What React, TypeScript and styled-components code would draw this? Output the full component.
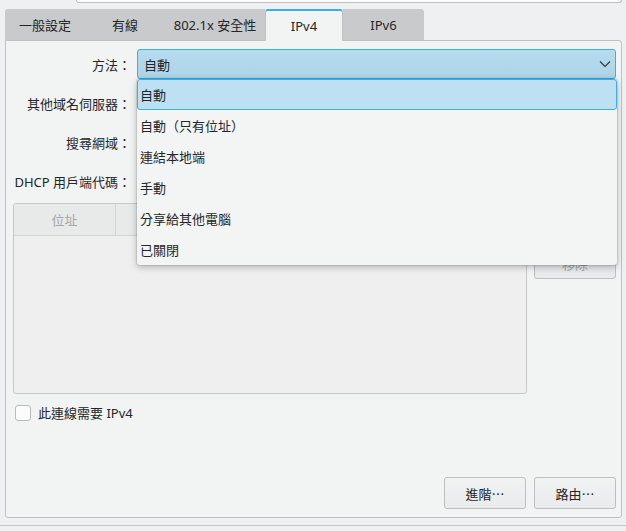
import React from "react";
import styled, { createGlobalStyle } from "styled-components";

const GlobalStyle = createGlobalStyle`
  html, body { margin: 0; padding: 0; background: #eff0f1; }
  body {
    font-family: "Noto Sans", "Noto Sans CJK TC", sans-serif;
    font-size: 13px;
    color: #232629;
  }
  * { box-sizing: border-box; }
`;

const Window = styled.div`
  width: 626px;
  height: 531px;
  position: relative;
  overflow: hidden;
  background: #eff0f1;
  display: flex;
  flex-direction: column;
`;

const TopField = styled.div`
  height: 3px;
  margin: 0 4px 0 76px;
  background: #fcfcfc;
  border: 1px solid #bcbebf;
  border-top: none;
  border-radius: 0 0 3px 3px;
`;

const TabBar = styled.div`
  display: flex;
  margin-top: 6px;
  padding-left: 5px;
  height: 31px;
`;

const Tab = styled.div<{ $w: number; $active?: boolean; $first?: boolean; $last?: boolean }>`
  width: ${(p) => p.$w}px;
  display: flex;
  align-items: center;
  justify-content: center;
  font-family: "Noto Sans", "Noto Sans CJK TC", sans-serif;
  font-size: 13px;
  color: #232629;
  background: ${(p) => (p.$active ? "#f2f3f3" : "#c9cacb")};
  border-top: ${(p) => (p.$active ? "2px solid #3daee9" : "none")};
  border-left: ${(p) => (p.$active ? "1px solid #bfc1c2" : "none")};
  border-right: ${(p) => (p.$active ? "1px solid #bfc1c2" : "none")};
  border-radius: ${(p) =>
    p.$active ? "3px 3px 0 0" : p.$first ? "3px 0 0 0" : p.$last ? "0 3px 0 0" : "0"};
  position: relative;
  z-index: ${(p) => (p.$active ? 2 : 1)};
  margin-bottom: ${(p) => (p.$active ? "-1px" : "0")};
  padding-bottom: ${(p) => (p.$active ? "1px" : "0")};
`;

const Panel = styled.div`
  margin: 0 4px 0 5px;
  height: 478px;
  background: #f2f3f3;
  border: 1px solid #bfc1c2;
  border-radius: 0 3px 3px 3px;
  padding: 8px 5px 8px 0;
  display: flex;
  flex-direction: column;
  position: relative;
`;

const Form = styled.div`
  display: grid;
  grid-template-columns: 125px 1fr;
  column-gap: 6px;
  row-gap: 9px;
  align-items: center;
`;

const Label = styled.div`
  text-align: right;
  white-space: nowrap;
  font-size: 13px;
  color: #232629;
`;

const Combo = styled.div`
  height: 30px;
  border: 1px solid #3daee9;
  border-radius: 3px;
  background: linear-gradient(#b6dcee, #acd3e7);
  display: flex;
  align-items: center;
  justify-content: space-between;
  padding: 0 4px 0 6px;
`;

const TextField = styled.div`
  height: 30px;
  border: 1px solid #bcbebf;
  border-radius: 3px;
  background: #fcfcfc;
`;

const TableArea = styled.div`
  display: flex;
  gap: 7px;
  margin-top: 7px;
  padding-left: 7px;
  height: 191px;
`;

const Table = styled.div`
  flex: 1;
  border: 1px solid #c6c7c8;
  border-radius: 3px;
  background: #efefef;
  overflow: hidden;
`;

const HeaderRow = styled.div`
  display: grid;
  grid-template-columns: 102px 200px 1fr;
  height: 32px;
  background: #e8e9e9;
  border-bottom: 1px solid #d3d4d5;
`;

const HeaderCell = styled.div<{ $divider?: boolean }>`
  display: flex;
  align-items: center;
  justify-content: center;
  color: #a6a7a8;
  font-size: 13px;
  border-right: ${(p) => (p.$divider ? "1px solid #d3d4d5" : "none")};
`;

const SideButtons = styled.div`
  width: 82px;
  display: flex;
  flex-direction: column;
  gap: 9px;
  padding-top: 3px;
`;

const Button = styled.div<{ $disabled?: boolean }>`
  height: 32px;
  width: 82px;
  border: 1px solid #bcbebf;
  border-radius: 3px;
  background: ${(p) => (p.$disabled ? "#e9eaeb" : "linear-gradient(#f1f2f2, #eaebec)")};
  color: ${(p) => (p.$disabled ? "#a6a7a8" : "#232629")};
  display: flex;
  align-items: center;
  justify-content: center;
  font-size: 13px;
`;

const Ellipsis = styled.span`
  font-family: "Noto Sans CJK TC", sans-serif;
`;

const CheckRow = styled.div`
  display: flex;
  align-items: center;
  gap: 7px;
  margin-top: 9px;
  padding-left: 9px;
`;

const CheckBox = styled.div`
  width: 16px;
  height: 16px;
  border: 1px solid #b8babc;
  border-radius: 3px;
  background: #fcfcfc;
`;

const Spacer = styled.div`
  flex: 1;
`;

const BottomButtons = styled.div`
  display: flex;
  justify-content: flex-end;
  gap: 8px;
`;

const BottomLine = styled.div`
  margin-top: 7px;
  height: 1px;
  background: #c4c5c6;
`;

const Popup = styled.div`
  position: absolute;
  left: 137px;
  top: 79px;
  width: 480px;
  height: 186px;
  background: #f3f4f4;
  border-radius: 3px;
  box-shadow: 0 2px 7px rgba(0, 0, 0, 0.28), 0 0 0 1px rgba(0, 0, 0, 0.08);
  display: flex;
  flex-direction: column;
  z-index: 10;
`;

const Item = styled.div<{ $selected?: boolean }>`
  height: 31px;
  display: flex;
  align-items: center;
  padding-left: ${(p) => (p.$selected ? "2px" : "3px")};
  font-size: 13px;
  color: #232629;
  background: ${(p) => (p.$selected ? "#bde0f3" : "transparent")};
  border: ${(p) => (p.$selected ? "1px solid #3daee9" : "none")};
  border-radius: ${(p) => (p.$selected ? "3px" : "0")};
`;

const Chevron = () => (
  <svg width="12" height="8" viewBox="0 0 12 8">
    <path d="M1 1.5 L6 6.5 L11 1.5" fill="none" stroke="#31363b" strokeWidth="1.1" />
  </svg>
);

const tabs = [
  { t: "一般設定", w: 80 },
  { t: "有線", w: 80 },
  { t: "802.1x 安全性", w: 100 },
  { t: "IPv4", w: 78, active: true },
  { t: "IPv6", w: 81 },
];

const options = ["自動", "自動（只有位址）", "連結本地端", "手動", "分享給其他電腦", "已關閉"];

export default function App() {
  return (
    <>
      <GlobalStyle />
      <Window>
        <TopField />
        <TabBar>
          {tabs.map((tab, i) => (
            <Tab key={tab.t} $w={tab.w} $active={tab.active} $first={i === 0} $last={i === tabs.length - 1}>
              {tab.t}
            </Tab>
          ))}
        </TabBar>
        <Panel>
          <Form>
            <Label>方法：</Label>
            <Combo>
              <span>自動</span>
              <Chevron />
            </Combo>
            <Label>其他域名伺服器：</Label>
            <TextField />
            <Label>搜尋網域：</Label>
            <TextField />
            <Label>DHCP 用戶端代碼：</Label>
            <TextField />
          </Form>
          <TableArea>
            <Table>
              <HeaderRow>
                <HeaderCell $divider>位址</HeaderCell>
                <HeaderCell $divider />
                <HeaderCell />
              </HeaderRow>
            </Table>
            <SideButtons>
              <Button $disabled />
              <Button $disabled>移除</Button>
            </SideButtons>
          </TableArea>
          <CheckRow>
            <CheckBox />
            <span>此連線需要 IPv4</span>
          </CheckRow>
          <Spacer />
          <BottomButtons>
            <Button>
              進階<Ellipsis>…</Ellipsis>
            </Button>
            <Button>
              路由<Ellipsis>…</Ellipsis>
            </Button>
          </BottomButtons>
        </Panel>
        <BottomLine />
        <Popup>
          {options.map((o, i) => (
            <Item key={o} $selected={i === 0}>
              {o}
            </Item>
          ))}
        </Popup>
      </Window>
    </>
  );
}
